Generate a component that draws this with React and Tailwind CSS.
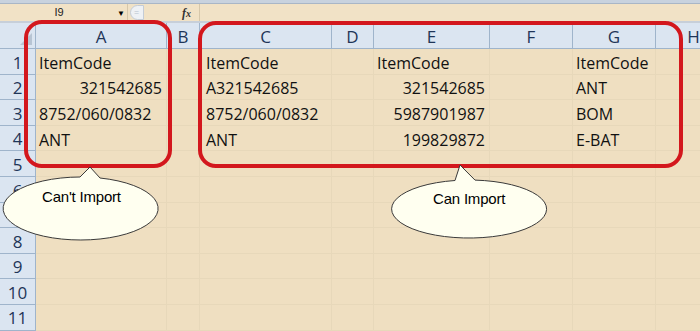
import React from 'react'

const cols = ['A', 'B', 'C', 'D', 'E', 'F', 'G', 'H']

// each row: [text, align] per column; empty string = blank cell
const data = [
  [['ItemCode'], [''], ['ItemCode'], [''], ['ItemCode'], [''], ['ItemCode'], ['']],
  [['321542685', 'r'], [''], ['A321542685'], [''], ['321542685', 'r'], [''], ['ANT'], ['']],
  [['8752/060/0832'], [''], ['8752/060/0832'], [''], ['5987901987', 'r'], [''], ['BOM'], ['']],
  [['ANT'], [''], ['ANT'], [''], ['199829872', 'r'], [''], ['E-BAT'], ['']],
]

const font = { fontFamily: '"Open Sans", "Noto Sans", sans-serif' }
const arial = { fontFamily: '"Liberation Sans", Arial, sans-serif' }

function Cell({ text, align, col }) {
  const pad = col === 2 ? 'pl-[6px]' : 'pl-[3px]'
  return (
    <div
      className={`h-[25.6px] border-r border-b border-[#e7d8ba] flex items-center pt-[3px] overflow-visible whitespace-nowrap text-[16px] text-[#111] ${
        align === 'r' ? 'justify-end pr-[4px]' : pad
      }`}
    >
      {text}
    </div>
  )
}

export default function App() {
  const rows = Array.from({ length: 11 }, (_, i) => i)

  return (
    <div className="relative w-[700px] h-[331px] overflow-hidden bg-[#efdfc1]" style={font}>
      {/* top strip */}
      <div className="h-[4px] bg-[#c8d2de] border-b border-[#a9b6c6]" />

      {/* formula bar */}
      <div className="h-[19px] flex items-center bg-[#f1e2c6] border-b-2 border-[#c7cfd9]">
        <div className="w-[128px] h-full flex items-center relative border-r border-[#d6c7aa]">
          <span className="w-[118px] text-center text-[11px] text-[#222]" style={arial}>I9</span>
          <span className="absolute left-[117px] top-[3px] text-[8px] text-black">▼</span>
        </div>
        <div className="w-[14px] h-[15px] ml-[2px] rounded-l-full border border-[#c4ccd6] bg-[#eef1f5] text-[9px] leading-[13px] text-[#b8c2ce] pl-[3px]">
          =
        </div>
        <div className="w-[38px]" />
        <span className="text-[12px] italic font-bold text-[#333]" style={{ fontFamily: '"Liberation Serif", serif' }}>
          f<span className="text-[10px]">x</span>
        </span>
        <div className="ml-[8px] h-full flex-1 border-l border-[#d6c7aa]" />
      </div>

      {/* sheet grid */}
      <div className="grid grid-cols-[36px_131px_33px_132px_42px_116px_83px_83px_76px]">
        {/* corner */}
        <div className="h-[26px] bg-[#dbe5f1] border-r border-b border-[#9fb4cb] relative">
          <div className="absolute right-[3px] bottom-[3px] w-0 h-0 border-l-[12px] border-l-transparent border-b-[12px] border-b-[#b7c4d3]" />
        </div>
        {cols.map((c) => (
          <div
            key={c}
            className="h-[26px] bg-[#dbe5f1] border-r border-b border-[#9fb4cb] flex items-center justify-center pt-[2px] text-[17px] text-[#1f3558]"
          >
            {c}
          </div>
        ))}

        {rows.map((r) => (
          <React.Fragment key={r}>
            <div className="h-[25.6px] bg-[#dbe5f1] border-r border-b border-[#9fb4cb] flex items-center justify-center pt-[2px] text-[17px] text-[#1f3558]">
              {r + 1}
            </div>
            {cols.map((c, ci) => {
              const cell = data[r] ? data[r][ci] : ['']
              return <Cell key={c} text={cell[0]} align={cell[1]} col={ci} />
            })}
          </React.Fragment>
        ))}
      </div>

      {/* red highlight boxes */}
      <div className="absolute left-[24px] top-[20px] w-[148px] h-[148px] border-4 border-[#d3171d] rounded-[18px] pointer-events-none" />
      <div className="absolute left-[198px] top-[21px] w-[485px] h-[147px] border-4 border-[#d3171d] rounded-[18px] pointer-events-none" />

      {/* callouts */}
      <svg className="absolute left-0 top-0 pointer-events-none" width="700" height="331">
        <path
          d="M 80 177 L 90 167 L 100 178 A 77.5 31.5 0 1 1 80 177 Z"
          fill="#fffff0"
          stroke="#3a3a3a"
          strokeWidth="1"
        />
        <path
          d="M 455 180.5 L 460 165 L 475 180.1 A 77.5 29 0 1 1 455 180.5 Z"
          fill="#fffff0"
          stroke="#3a3a3a"
          strokeWidth="1"
        />
      </svg>
      <div className="absolute left-[42px] top-[186px] text-[15px] text-black tracking-[-0.2px]" style={arial}>
        Can't Import
      </div>
      <div className="absolute left-[433px] top-[188px] text-[15px] text-black tracking-[-0.2px]" style={arial}>
        Can Import
      </div>
    </div>
  )
}
